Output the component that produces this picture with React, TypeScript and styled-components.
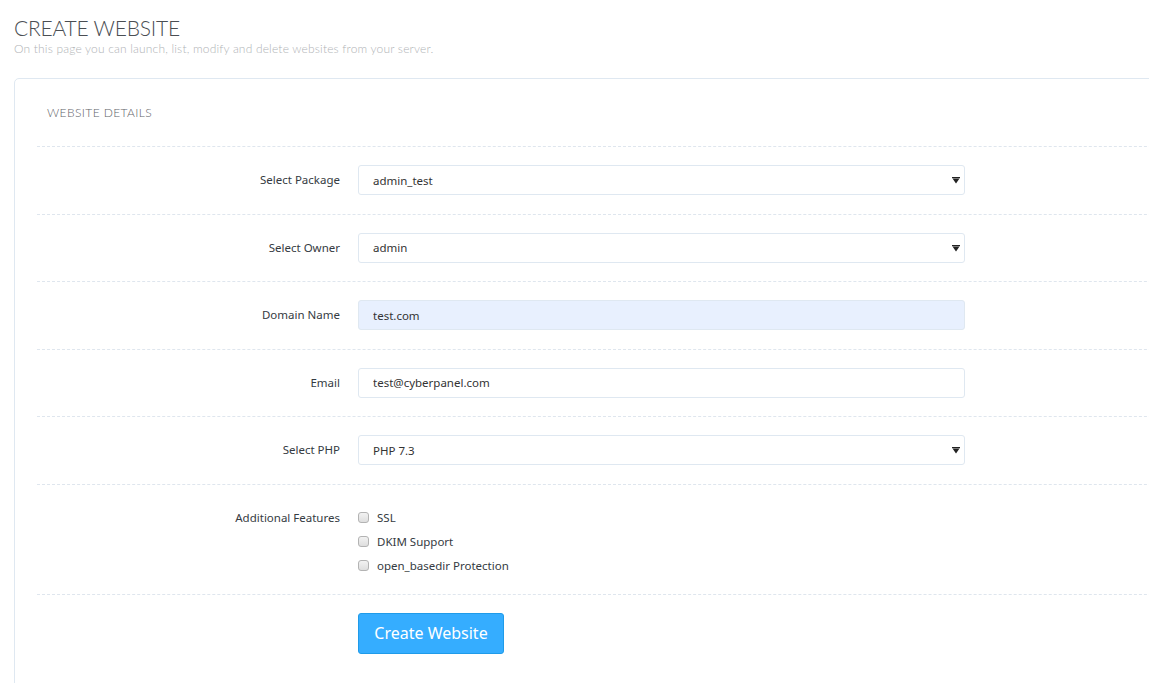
import React from "react";
import styled, { createGlobalStyle } from "styled-components";

const Global = createGlobalStyle`
  html, body { margin: 0; padding: 0; background: #fff; overflow: hidden; }
  body { font-family: "Noto Sans", "Open Sans", sans-serif; }
`;

const Page = styled.div`
  padding: 15px 0 0 14px;
  width: 1200px;
`;

const Title = styled.h1`
  margin: 0;
  font-family: "Lato", "Open Sans", sans-serif;
  font-weight: 300;
  font-size: 21px;
  line-height: 26px;
  color: #4a4e53;
  letter-spacing: -0.2px;
`;

const Subtitle = styled.p`
  margin: 1px 0 0;
  font-family: "Lato", "Open Sans", sans-serif;
  font-weight: 300;
  font-size: 12px;
  line-height: 14px;
  color: #b0b3b6;
  letter-spacing: 0.18px;
`;

const Panel = styled.section`
  margin-top: 22px;
  border: 1px solid #dfe8f1;
  border-radius: 5px 5px 0 0;
  padding: 0 22px 30px;
  width: 1160px;
`;

const PanelTitle = styled.h3`
  margin: 0;
  padding: 26px 10px 0;
  height: 41px;
  font-family: "Lato", "Open Sans", sans-serif;
  font-weight: 300;
  font-size: 12px;
  line-height: 16px;
  color: #5f646a;
  letter-spacing: 0.4px;
`;

const Row = styled.div<{ $top?: number; $bottom?: number }>`
  display: grid;
  grid-template-columns: 303px 607px;
  column-gap: 18px;
  align-items: ${(p) => (p.$top ? "start" : "center")};
  border-top: 1px dashed #dfe6ee;
  padding: ${(p) => p.$top ?? 18}px 0 ${(p) => p.$bottom ?? 18.5}px;
`;

const Label = styled.label`
  text-align: right;
  font-size: 11.5px;
  line-height: 24px;
  color: #353b42;
`;

const FieldWrap = styled.div`
  position: relative;
`;

const fieldCss = `
  box-sizing: border-box;
  width: 100%;
  height: 30px;
  border: 1px solid #dfe8f1;
  border-radius: 3px;
  padding: 0 14px;
  font-family: "Noto Sans", "Open Sans", sans-serif;
  font-size: 11.5px;
  color: #333;
  outline: none;
`;

const Select = styled.select`
  ${fieldCss}
  appearance: none;
  -webkit-appearance: none;
  background: #fff;
`;

const Input = styled.input<{ $filled?: boolean }>`
  ${fieldCss}
  background: ${(p) => (p.$filled ? "#e8f0fe" : "#fff")};
`;

const Arrow = styled.svg`
  position: absolute;
  right: 5px;
  top: 12px;
  pointer-events: none;
`;

const Checks = styled.div`
  display: flex;
  flex-direction: column;
`;

const CheckLine = styled.label`
  display: flex;
  align-items: center;
  gap: 8px;
  height: 24px;
  font-size: 11.5px;
  color: #353b42;
`;

const Box = styled.input`
  appearance: none;
  -webkit-appearance: none;
  margin: 0;
  width: 11px;
  height: 11px;
  border: 1px solid #b3b3b3;
  border-radius: 3px;
  background: linear-gradient(#f2f2f2, #dedede);
`;

const Button = styled.button`
  grid-column: 2;
  justify-self: start;
  width: 146px;
  height: 41px;
  border: 1px solid #1f9be9;
  border-radius: 3px;
  background: #35adff;
  color: #fff;
  font-family: "Noto Sans", "Open Sans", sans-serif;
  font-size: 16px;
  cursor: pointer;
`;

const SelectArrow = () => (
  <Arrow width="8" height="7" viewBox="0 0 8 7">
    <rect x="0" y="0" width="8" height="1.2" fill="#222" />
    <path d="M0.5 1.5 H7.5 L4 6.5 Z" fill="#222" />
  </Arrow>
);

const SelectField = ({ value }: { value: string }) => (
  <FieldWrap>
    <Select defaultValue={value}>
      <option value={value}>{value}</option>
    </Select>
    <SelectArrow />
  </FieldWrap>
);

export default function App() {
  return (
    <>
      <Global />
      <Page>
        <Title>CREATE WEBSITE</Title>
        <Subtitle>On this page you can launch, list, modify and delete websites from your server.</Subtitle>
        <Panel>
          <PanelTitle>WEBSITE DETAILS</PanelTitle>
          <Row>
            <Label>Select Package</Label>
            <SelectField value="admin_test" />
          </Row>
          <Row>
            <Label>Select Owner</Label>
            <SelectField value="admin" />
          </Row>
          <Row>
            <Label>Domain Name</Label>
            <Input $filled defaultValue="test.com" />
          </Row>
          <Row>
            <Label>Email</Label>
            <Input defaultValue="test@cyberpanel.com" />
          </Row>
          <Row>
            <Label>Select PHP</Label>
            <SelectField value="PHP 7.3" />
          </Row>
          <Row $top={21} $bottom={16}>
            <Label>Additional Features</Label>
            <Checks>
              <CheckLine><Box type="checkbox" />SSL</CheckLine>
              <CheckLine><Box type="checkbox" />DKIM Support</CheckLine>
              <CheckLine><Box type="checkbox" />open_basedir Protection</CheckLine>
            </Checks>
          </Row>
          <Row>
            <Button>Create Website</Button>
          </Row>
        </Panel>
      </Page>
    </>
  );
}
